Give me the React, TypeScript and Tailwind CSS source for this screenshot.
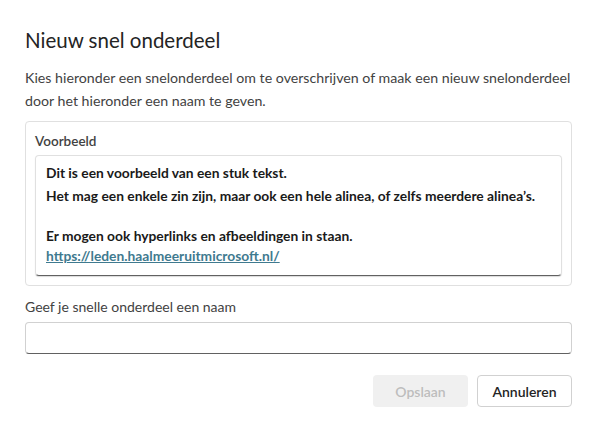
import React from "react";

// Dialoog: nieuw snel onderdeel
export default function App() {
  return (
    <div className="w-[597px] h-[425px] bg-white text-[#242424] font-['Lato',sans-serif] px-[25px] pt-[26px]">
      <h1 className="text-[20.5px] leading-[28px] font-normal">Nieuw snel onderdeel</h1>

      <p className="mt-[12px] w-[556px] text-[14.2px] leading-[23px] text-[#424242]">
        Kies hieronder een snelonderdeel om te overschrijven of maak een nieuw snelonderdeel door het hieronder een naam te geven.
      </p>

      <div className="mt-[9px] h-[165px] border border-[#e0e0e0] rounded-[4px] px-[9px] pt-[9px]">
        <div className="text-[13.5px] leading-[20px] font-semibold text-[#424242]">Voorbeeld</div>
        <div className="mt-[4px] h-[121px] border border-[#e0e0e0] border-b-[#616161] rounded-[4px] pl-[10px] pt-[7px] font-bold text-[13.8px] text-[#1a1a1a] shadow-[0_1px_1px_rgba(0,0,0,0.15)]">
          <p className="leading-[20px]">Dit is een voorbeeld van een stuk tekst.</p>
          <p className="leading-[20px] mt-[3px]">Het mag een enkele zin zijn, maar ook een hele alinea, of zelfs meerdere alinea’s.</p>
          <p className="leading-[20px] mt-[20px]">Er mogen ook hyperlinks en afbeeldingen in staan.</p>
          <a className="block leading-[20px] text-[#3f7a8f] underline" href="#">https://leden.haalmeeruitmicrosoft.nl/</a>
        </div>
      </div>

      <label className="block mt-[11px] text-[14px] leading-[20px] text-[#424242]">Geef je snelle onderdeel een naam</label>
      <input className="mt-[5px] w-full h-[32px] border border-[#d1d1d1] border-b-[#616161] rounded-[4px] outline-none px-[10px] text-[14px]" />

      <div className="mt-[21px] flex justify-end gap-[9px]">
        <button className="w-[95px] h-[32px] rounded-[4px] bg-[#f0f0f0] text-[#bdbdbd] text-[14px] font-semibold">Opslaan</button>
        <button className="w-[95px] h-[32px] rounded-[4px] bg-white border border-[#d1d1d1] text-[#242424] text-[14px] font-semibold">Annuleren</button>
      </div>
    </div>
  );
}
